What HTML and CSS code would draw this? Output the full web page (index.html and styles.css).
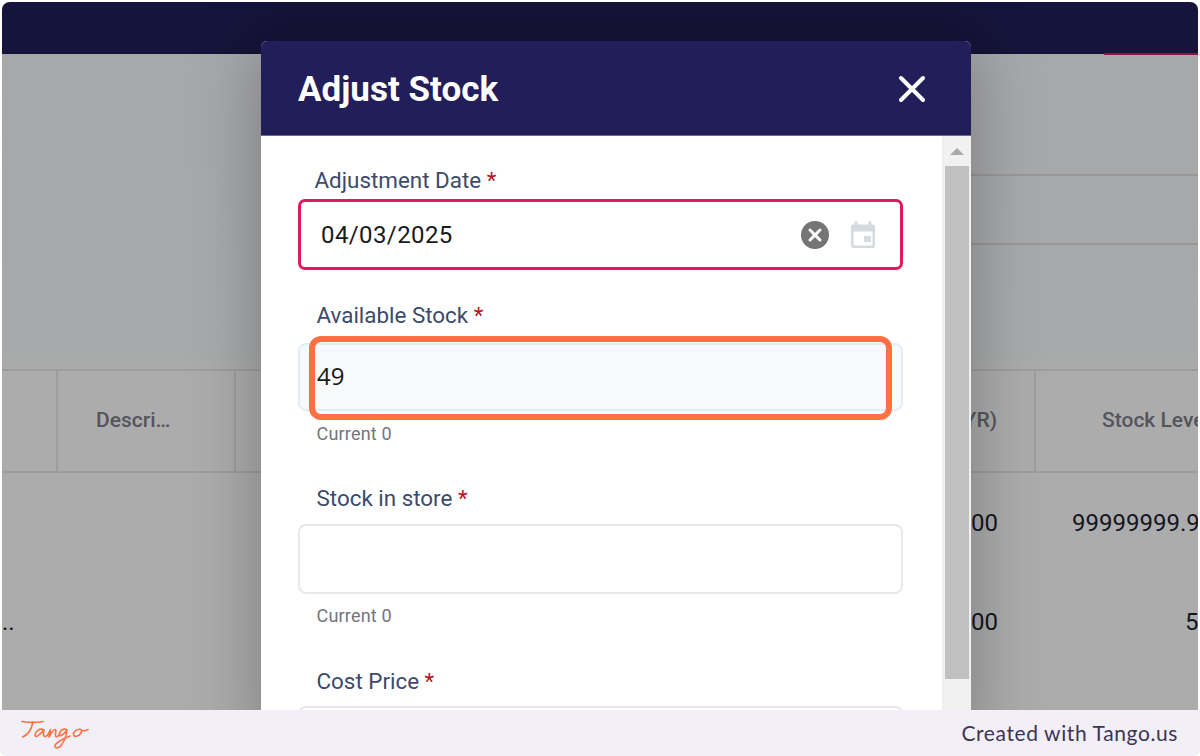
FILE: index.html
```html
<!DOCTYPE html>
<html lang="en">
<head>
<meta charset="utf-8">
<title>Adjust Stock</title>
<link rel="stylesheet" href="styles.css">
</head>
<body>
<div class="screen">
  <div class="app">
    <header class="topbar"><span class="topbar-accent"></span></header>
    <main class="page">
      <div class="page-rows">
        <div class="page-row"></div>
        <div class="page-row"></div>
      </div>
      <div class="table">
        <div class="thead">
          <div class="th th-a"></div>
          <div class="th th-b">Descri…</div>
          <div class="th th-c">(YR)</div>
          <div class="th th-d">Stock Level</div>
        </div>
        <div class="tr tr-one">
          <div class="td td-a"></div>
          <div class="td td-c">.00</div>
          <div class="td td-d">99999999.99</div>
        </div>
        <div class="tr tr-two">
          <div class="td td-a">..</div>
          <div class="td td-c">.00</div>
          <div class="td td-d td-five">5</div>
        </div>
      </div>
    </main>
    <section class="modal">
      <div class="modal-head">
        <h1 class="modal-title">Adjust Stock</h1>
        <svg class="modal-close" viewBox="0 0 28 28" width="28" height="28"><path d="M3 3 L25 25 M25 3 L3 25" fill="none" stroke="#fff" stroke-width="4" stroke-linecap="round"/></svg>
      </div>
      <div class="modal-body">
        <div class="form">
          <div class="field field-date">
            <label class="label label-date">Adjustment Date <span class="req">*</span></label>
            <div class="input input-error">
              <span class="value value-date">04/03/2025</span>
              <svg class="icon-clear" viewBox="0 0 28 28" width="28" height="28"><circle cx="14" cy="14" r="14" fill="#757575"/><path d="M9 9 L19 19 M19 9 L9 19" fill="none" stroke="#fff" stroke-width="3" stroke-linecap="round"/></svg>
              <svg class="icon-cal" viewBox="0 0 26 28" width="26" height="28"><path d="M6 1.5 V5 M20 1.5 V5" stroke="#d5dae1" stroke-width="3" stroke-linecap="round"/><path d="M3 3.5 H23 A2 2 0 0 1 25 5.5 V25 A2 2 0 0 1 23 27 H3 A2 2 0 0 1 1 25 V5.5 A2 2 0 0 1 3 3.5 Z M3.5 10.5 V24.5 H22.5 V10.5 Z" fill="#d5dae1" fill-rule="evenodd"/><rect x="14" y="15" width="7" height="6" fill="#d5dae1"/></svg>
            </div>
          </div>
          <div class="field field-stock">
            <label class="label">Available Stock <span class="req">*</span></label>
            <div class="input input-disabled"><span class="value value-stock">49</span></div>
            <div class="hint">Current 0</div>
          </div>
          <div class="field field-store">
            <label class="label">Stock in store <span class="req">*</span></label>
            <div class="input"></div>
            <div class="hint">Current 0</div>
          </div>
          <div class="field field-cost">
            <label class="label">Cost Price <span class="req">*</span></label>
            <div class="input"></div>
          </div>
        </div>
        <div class="scrollbar">
          <span class="scroll-arrow"></span>
          <span class="scroll-thumb"></span>
        </div>
      </div>
      <div class="highlight"></div>
    </section>
  </div>
  <footer class="footer">
    <svg class="logo" viewBox="0 0 70 32" width="70" height="32"><g fill="none" stroke="#ff7043" stroke-width="1.6" stroke-linecap="round" stroke-linejoin="round"><path d="M2 4.5 C8 5.5 16 5.8 23 4.5"/><path d="M13 5 C11.5 12 8 18 2.5 20"/><path d="M24 13 C20 10.5 15.5 14 15 18 C15 21 19 19 24 13 C23 16.5 23 20 25.5 19.5 C28 19 29 15.5 30.5 12.5 C30.5 15 29.5 17.5 29 20 C31 16.5 33 12.5 35 12.5 C37 12.5 35 16.5 35.5 19 C36 20.5 38 19.5 40 17"/><path d="M47 13 C43.5 10.5 39.5 14 39 17.5 C39 20 42.5 19 47 13 C46.5 18 44.5 24 41 28.5 C38 32 33 31.5 35.5 27.5 C38 24 44 21.5 50 19"/><path d="M61 12.5 C56.5 11.5 53 15 53.5 18 C54 20 58.5 20 61 16 C62 14 61.5 12.5 61 12.5 C61.5 14 64 14.5 68 12.5"/></g></svg>
    <span class="credit">Created with Tango.us</span>
  </footer>
</div>
</body>
</html>
```

FILE: styles.css
```css
* { box-sizing: border-box; }
html, body { margin: 0; height: 100%; }
body { background: #fff; font-family: Roboto, "Liberation Sans", sans-serif; overflow: hidden; }

.screen { width: 1200px; height: 756px; display: flex; flex-direction: column; background: #fff; }
.app {
  flex: 1; min-height: 0; position: relative; overflow: hidden;
  margin: 2px 2px 0; background: #acacac; border-radius: 8px 8px 0 0;
}

.topbar { height: 52px; background: #15143a; position: relative; border-bottom: 1px solid #100f2c; }
.topbar-accent { position: absolute; right: 0; bottom: -2px; width: 94px; height: 2px; background: #8c1740; }

.page { height: 656px; background: linear-gradient(180deg, #a7a8aa 0, #a8a9aa 300px, #acacac 320px); }
.page-rows { height: 315px; padding-top: 120px; }
.page-row { height: 69px; border-top: 2px solid #989898; margin-left: 960px; }

.table { color: #1a1a1a; }
.thead { display: flex; height: 104px; border-top: 2px solid #9d9d9d; border-bottom: 2px solid #9d9d9d; }
.th { flex: none; display: flex; align-items: center; font-size: 21px; font-weight: 500; color: #55555e; border-right: 2px solid #9d9d9d; padding-bottom: 2px; white-space: nowrap; }
.th-a { width: 56px; }
.th-b { width: 178px; padding-left: 38px; }
.th-c { width: 800px; justify-content: flex-end; padding-right: 37px; }
.th-d { flex: 1; border-right: 0; padding-left: 66px; }

.tr { display: flex; font-size: 24px; color: #15151f; white-space: nowrap; }
.tr-one { height: 99px; padding-top: 36px; }
.tr-two { height: 100px; padding-top: 36px; }
.td { flex: none; }
.td-a { width: 234px; }
.td-c { width: 762px; text-align: right; }
.td-d { padding-left: 74px; }
.td-five { padding-left: 187px; }

.modal {
  position: absolute; left: 259px; top: 39px; width: 710px; height: 720px;
  background: #fff; border-radius: 6px 6px 0 0;
  box-shadow: 0 0 70px rgba(0,0,0,.28);
  display: flex; flex-direction: column;
}
.modal-head {
  height: 95px; background: #211e5a; border-radius: 6px 6px 0 0;
  border-bottom: 1px solid #6a6990;
  display: flex; align-items: center; justify-content: space-between;
  padding: 2px 45px 0 37px;
}
.modal-title { margin: 0; color: #fff; font-size: 35px; font-weight: 700; }
.modal-close { display: block; }

.modal-body { flex: 1; display: flex; min-height: 0; }
.form { flex: 1; padding-left: 37px; padding-right: 39px; }

.label { display: block; font-size: 22.4px; line-height: 26px; color: #3d4a6b; padding-left: 18.5px; height: 26px; }
.req { color: #b8141f; }
.input {
  height: 70px; border: 2px solid #e8e8ea; border-radius: 8px; background: #fff;
  display: flex; align-items: center;
}
.field-date { padding-top: 31px; }
.label-date { padding-left: 16.5px; }
.input-error { border: 3px solid #e5175c; height: 71px; margin-top: 6px; padding: 0 24px 0 20px; border-radius: 7px; }
.value { font-size: 24px; color: #1a1a1a; }
.value-date { flex: 1; letter-spacing: .4px; }
.icon-clear { margin-right: 21px; flex: none; }
.icon-cal { flex: none; }

.field-stock { padding-top: 32px; }
.input-disabled { height: 68px; margin-top: 15px; background: #f7f9fd; border-color: #e6ebf5; padding-left: 17px; padding-bottom: 4px; }
.value-stock { font-family: "Open Sans", sans-serif; }
.hint { font-size: 18px; line-height: 22px; color: #75757a; padding-left: 18.5px; margin-top: 12px; letter-spacing: .2px; }

.field-store { padding-top: 40px; }
.field-store .input { margin-top: 13px; }
.field-store .hint { margin-top: 11px; }
.field-cost { padding-top: 41px; }
.field-cost .input { margin-top: 12px; }

.scrollbar { width: 29px; background: #f1f1f1; border-left: 1px solid #ececec; padding: 0 2px 0 2px; display: flex; flex-direction: column; align-items: center; position: relative; }
.scroll-arrow { width: 0; height: 0; margin-top: 12px; border-left: 7px solid transparent; border-right: 7px solid transparent; border-bottom: 7px solid #a9a9a9; }
.scroll-thumb { width: 24px; height: 513px; margin-top: 11px; background: #c0c0c0; }

.highlight { position: absolute; left: 48px; top: 295px; width: 583px; height: 84px; border: 6px solid #ff7043; border-radius: 12px; pointer-events: none; }

.footer { height: 46px; flex: none; display: flex; align-items: center; justify-content: space-between; padding: 0 22px 0 20px; background: #f2f0f6; position: relative; border-radius: 0 0 6px 6px; }
.logo { display: block; overflow: visible; }
.credit { font-family: Lato, sans-serif; font-size: 21px; color: #3f3454; letter-spacing: .6px; padding-bottom: 2px; }
```
